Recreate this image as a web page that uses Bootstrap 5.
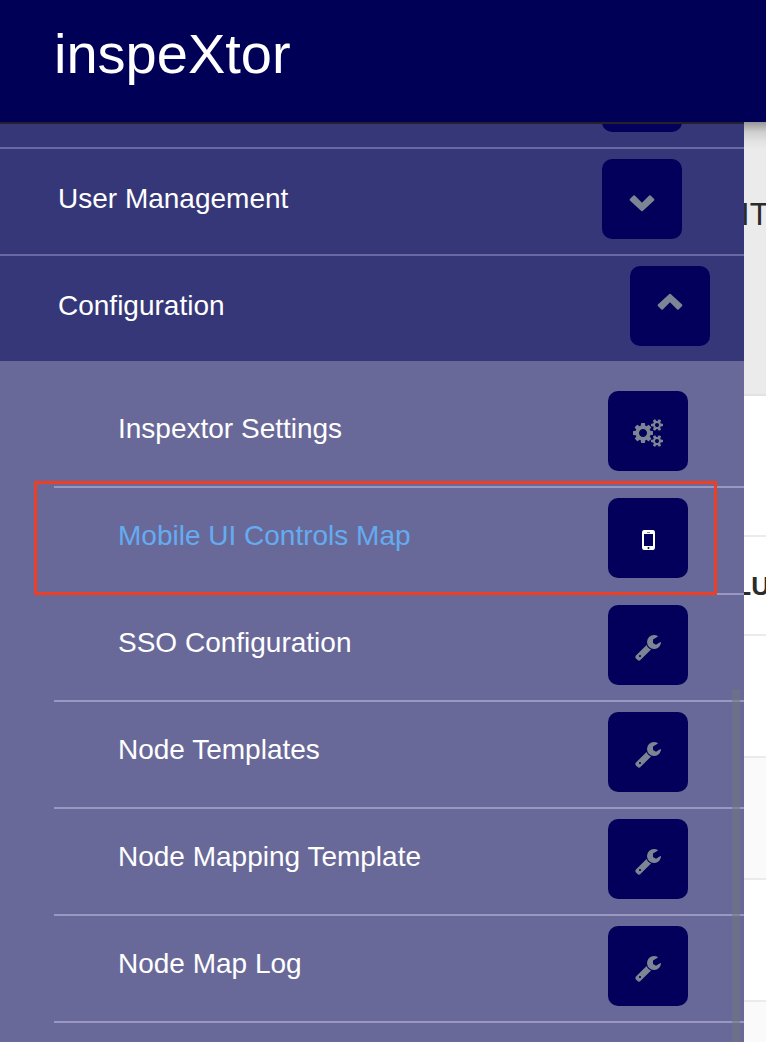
<!DOCTYPE html>
<html lang="en">
<head>
<meta charset="utf-8">
<meta name="viewport" content="width=device-width, initial-scale=1">
<title>inspeXtor</title>
<link href="https://cdn.jsdelivr.net/npm/bootstrap@5.3.0/dist/css/bootstrap.min.css" rel="stylesheet">
<style>
  body { font-family: "Liberation Sans", Arial, sans-serif; font-size: 28px; line-height: 32px; background: #fff; }
  .app-header { background: #010057; padding: 20px 54px 34px; }
  .app-title { font-size: 56px; line-height: 68px; }
  .side { background: #363778; border-top: 2px solid #222228; }
  .side a { color: #fff; text-decoration: none; }
  .side-row { padding: 10px 62px 15px 58px; border-bottom: 2px solid #6968a0; }
  .row-cut { height: 25px; padding-top: 0; }
  .row-open { padding-right: 34px; border-bottom: 0; }
  .tile { width: 80px; height: 80px; background: #02005a; border: 0; border-radius: 10px; color: #7d8595; padding: 4px 0 0; }
  .tile-down { padding: 8px 0 0; }
  .tile-up { padding: 0 0 8px; }
  .sub { background: #696999; padding: 20px 0 0 54px; }
  .sub-row { padding: 10px 56px 15px 64px; border-bottom: 2px solid #9a98c2; }
  .sub-row a { padding-bottom: 4px; }
  .sub-row.current a { color: #64acf2; }
  .sub-row.current .tile { color: #fff; }
  .callout { inset: -7px 27px -2px -20px; border: 3px solid #ee3f24; pointer-events: none; z-index: 1; }
  .thumb { right: 4px; top: 565px; bottom: 0; width: 8px; background: rgba(112,118,128,.55); }
  .page-edge { width: 22px; color: #2b2b2b; white-space: nowrap; }
  .page-edge > div { border-bottom: 2px solid #ebebeb; }
  .edge-top { background: linear-gradient(rgba(0,0,0,.36), rgba(0,0,0,.12) 10px, rgba(0,0,0,.03) 20px, transparent 28px) #ebebeb; height: 274px; padding-top: 76px; font-size: 32px; border-color: #e2e2e2 !important; }
  .edge-filter { height: 141px; }
  .edge-head { height: 99px; font-size: 26px; padding-top: 33px; }
  .edge-head span { margin-right: -4px; }
  .edge-item { height: 122px; }
  .edge-alt { background: #fafafa; }
</style>
<script src="https://cdn.jsdelivr.net/npm/bootstrap@5.3.0/dist/js/bootstrap.bundle.min.js"></script>
</head>
<body class="vh-100 overflow-hidden d-flex flex-column">
<svg class="d-none" aria-hidden="true">
  <symbol id="i-wrench" viewBox="0 0 1792 1792"><path d="M448 1472q0-26-19-45t-45-19-45 19-19 45 19 45 45 19 45-19 19-45zm644-420l-682 682q-37 37-90 37-52 0-91-37l-106-108q-38-36-38-90 0-53 38-91l681-681q39 98 114.500 173.500t173.500 114.500zm634-435q0 39-23 106-47 134-164.500 217.500t-258.500 83.500q-185 0-316.500-131.500t-131.500-316.500 131.500-316.500 316.500-131.500q58 0 121.500 16.500t107.500 46.500q16 11 16 28t-16 28l-293 169v224l193 107q5-3 79-48.500t135.500-81 70.500-35.500q15 0 23.500 10t8.500 25z"/></symbol>
  <symbol id="i-cogs" viewBox="0 0 1920 1792"><path d="M896 896q0-106-75-181t-181-75-181 75-75 181 75 181 181 75 181-75 75-181zm768 512q0-52-38-90t-90-38-90 38-38 90q0 53 37.500 90.500t90.500 37.500 90.500-37.500 37.500-90.500zm0-1024q0-52-38-90t-90-38-90 38-38 90q0 53 37.500 90.500t90.500 37.500 90.500-37.500 37.500-90.500zm-384 421v185q0 10-7 19.500t-16 10.500l-155 24q-11 35-32 76 34 48 90 115 7 11 7 20 0 12-7 19-23 30-82.500 89.500t-78.500 59.500q-11 0-21-7l-115-90q-37 19-77 31-11 108-23 155-7 24-30 24h-186q-11 0-20-7.500t-10-17.500l-23-153q-34-10-75-31l-118 89q-7 7-20 7-11 0-21-8-144-133-144-160 0-9 7-19 10-14 41-53t47-61q-23-44-35-82l-152-24q-10-1-17-9.500t-7-19.500v-185q0-10 7-19.500t16-10.500l155-24q11-35 32-76-34-48-90-115-7-11-7-20 0-12 7-20 22-30 82-89t79-59q11 0 21 7l115 90q34-18 77-32 11-108 23-154 7-24 30-24h186q11 0 20 7.500t10 17.500l23 153q34 10 75 31l118-89q8-7 20-7 11 0 21 8 144 133 144 160 0 8-7 19-12 16-42 54t-45 60q23 48 34 82l152 23q10 2 17 10.500t7 19.500zm640 533v140q0 16-149 31-12 27-30 52 51 113 51 138 0 4-4 7-122 71-124 71-8 0-46-47t-52-68q-20 2-30 2t-30-2q-14 21-52 68t-46 47q-2 0-124-71-4-3-4-7 0-25 51-138-18-25-30-52-149-15-149-31v-140q0-16 149-31 13-29 30-52-51-113-51-138 0-4 4-7 4-2 35-20t59-34 30-16q8 0 46 46.500t52 67.500q20-2 30-2t30 2q51-71 92-112l6-2q4 0 124 70 4 3 4 7 0 25-51 138 17 23 30 52 149 15 149 31zm0-1024v140q0 16-149 31-12 27-30 52 51 113 51 138 0 4-4 7-122 71-124 71-8 0-46-47t-52-68q-20 2-30 2t-30-2q-14 21-52 68t-46 47q-2 0-124-71-4-3-4-7 0-25 51-138-18-25-30-52-149-15-149-31v-140q0-16 149-31 13-29 30-52-51-113-51-138 0-4 4-7 4-2 35-20t59-34 30-16q8 0 46 46.500t52 67.500q20-2 30-2t30 2q51-71 92-112l6-2q4 0 124 70 4 3 4 7 0 25-51 138 17 23 30 52 149 15 149 31z"/></symbol>
  <symbol id="i-phone" viewBox="0 0 13 20"><path fill-rule="evenodd" d="M2.500 0h8A2.300 2.300 0 0 1 13 2.300v15.400a2.300 2.300 0 0 1-2.500 2.300h-8A2.300 2.300 0 0 1 0 17.700V2.300A2.300 2.300 0 0 1 2.500 0zM2 4v12h9V4zM5 2v.6h3V2zM6.500 17a1 1 0 1 0 0 2 1 1 0 0 0 0-2z"/></symbol>
  <symbol id="i-down" viewBox="0 0 26 18"><path d="M.9 5L4.400 1.500q.7-.7 1.400 0L13 8.700l7.200-7.200q.7-.7 1.400 0L25.100 5q.7.700 0 1.400L13.700 17q-.7.700-1.400 0L.9 6.400q-.7-.7 0-1.400z"/></symbol>
  <symbol id="i-up" viewBox="0 0 26 18"><path d="M.9 13l3.500 3.500q.7.700 1.400 0L13 9.300l7.200 7.200q.7.700 1.400 0l3.500-3.500q.7-.7 0-1.400L13.700 1q-.7-.7-1.400 0L.9 11.600q-.7.700 0 1.400z"/></symbol>
</svg>

<header class="app-header text-white flex-shrink-0">
  <h1 class="app-title fw-normal m-0">inspeXtor</h1>
</header>

<div class="d-flex flex-grow-1 overflow-hidden">
  <nav class="side flex-grow-1 position-relative overflow-hidden" aria-label="Main menu">
    <div class="side-row row-cut d-flex align-items-end justify-content-end overflow-hidden">
      <button class="tile flex-shrink-0" type="button" aria-label="Expand"></button>
    </div>
    <div class="side-row d-flex align-items-center justify-content-between">
      <a href="#">User Management</a>
      <button class="tile tile-down d-flex align-items-center justify-content-center" type="button" aria-label="Expand User Management"><svg width="26" height="18" fill="currentColor"><use href="#i-down"/></svg></button>
    </div>
    <div class="side-row row-open d-flex align-items-center justify-content-between">
      <a href="#">Configuration</a>
      <button class="tile tile-up d-flex align-items-center justify-content-center" type="button" aria-label="Collapse Configuration"><svg width="26" height="18" fill="currentColor"><use href="#i-up"/></svg></button>
    </div>
    <ul class="sub list-unstyled m-0 vh-100">
      <li class="sub-row d-flex align-items-center justify-content-between"><a href="#">Inspextor Settings</a>
        <button class="tile d-flex align-items-center justify-content-center" type="button" aria-label="Open Inspextor Settings"><svg width="30" height="28" fill="currentColor"><use href="#i-cogs"/></svg></button></li>
      <li class="sub-row current position-relative d-flex align-items-center justify-content-between"><a href="#" aria-current="page">Mobile UI Controls Map</a>
        <button class="tile d-flex align-items-center justify-content-center" type="button" aria-label="Open Mobile UI Controls Map"><svg width="13" height="20" fill="currentColor"><use href="#i-phone"/></svg></button>
        <span class="callout position-absolute"></span></li>
      <li class="sub-row d-flex align-items-center justify-content-between"><a href="#">SSO Configuration</a>
        <button class="tile d-flex align-items-center justify-content-center" type="button" aria-label="Open SSO Configuration"><svg width="28" height="28" fill="currentColor"><use href="#i-wrench"/></svg></button></li>
      <li class="sub-row d-flex align-items-center justify-content-between"><a href="#">Node Templates</a>
        <button class="tile d-flex align-items-center justify-content-center" type="button" aria-label="Open Node Templates"><svg width="28" height="28" fill="currentColor"><use href="#i-wrench"/></svg></button></li>
      <li class="sub-row d-flex align-items-center justify-content-between"><a href="#">Node Mapping Template</a>
        <button class="tile d-flex align-items-center justify-content-center" type="button" aria-label="Open Node Mapping Template"><svg width="28" height="28" fill="currentColor"><use href="#i-wrench"/></svg></button></li>
      <li class="sub-row d-flex align-items-center justify-content-between"><a href="#">Node Map Log</a>
        <button class="tile d-flex align-items-center justify-content-center" type="button" aria-label="Open Node Map Log"><svg width="28" height="28" fill="currentColor"><use href="#i-wrench"/></svg></button></li>
    </ul>
    <div class="thumb position-absolute"></div>
  </nav>
  <main class="page-edge flex-shrink-0 overflow-hidden">
    <div class="edge-top d-flex justify-content-center"><span>IT</span></div>
    <div class="edge-filter"></div>
    <div class="edge-head d-flex justify-content-end fw-bold"><span>LU</span></div>
    <div class="edge-item"></div>
    <div class="edge-item edge-alt"></div>
    <div class="edge-item"></div>
    <div class="edge-item edge-alt"></div>
  </main>
</div>
</body>
</html>
